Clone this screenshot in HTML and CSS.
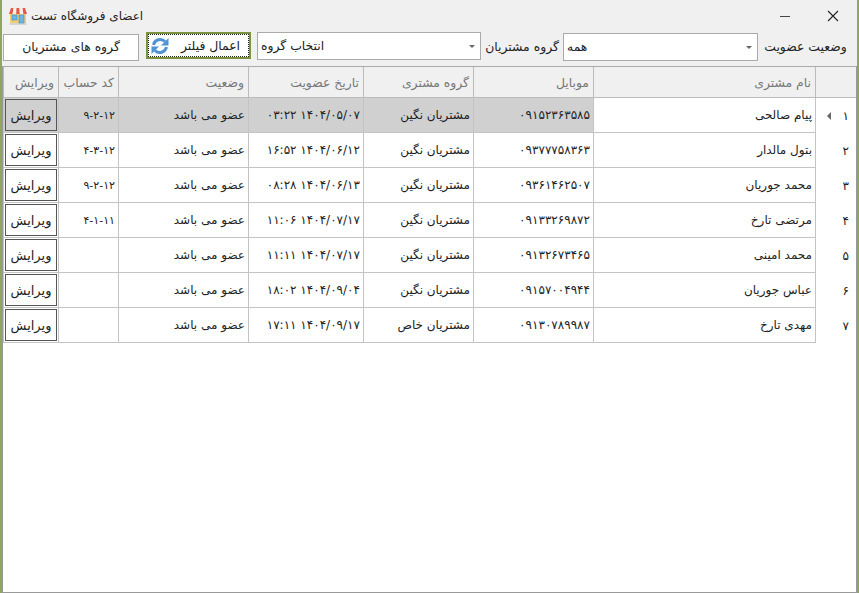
FILE: index.html
```html
<!DOCTYPE html>
<html>
<head>
  <title>اعضای فروشگاه تست</title>
  <link rel="stylesheet" href="styles.css">
</head>
<body>
  <div class="window">
    <div class="titlebar">
      <div class="title-left">
        <svg width="18" height="17" viewBox="0 0 18 17">
          <rect x="1" y="5" width="16" height="10" fill="#f2cf6b"/>
          <rect x="0.500" y="15" width="17" height="2" fill="#cfd4d6"/>
          <rect x="3" y="7" width="5" height="5" fill="#6db3e8" stroke="#3f8cc8" stroke-width="0.6"/>
          <rect x="10" y="7" width="5" height="8" fill="#6db3e8" stroke="#3f8cc8" stroke-width="0.6"/>
          <path d="M2 0 H4.500 L3.600 6 H0 Z" fill="#e4584a"/>
          <path d="M4.500 0 H7.500 L7.200 6 H3.600 Z" fill="#f8f2e6"/>
          <path d="M7.500 0 H10.500 L10.800 6 H7.200 Z" fill="#e4584a"/>
          <path d="M10.500 0 H13.500 L14.400 6 H10.800 Z" fill="#f8f2e6"/>
          <path d="M13.500 0 H16 L18 6 H14.400 Z" fill="#e4584a"/>
        </svg>
        <span class="title-text">اعضای فروشگاه تست</span>
      </div>
      <div class="title-btns">
        <span class="min-btn"></span>
        <svg width="12" height="12" viewBox="0 0 12 12"><path d="M1 1 L11 11 M11 1 L1 11" stroke="#222" stroke-width="1.1" fill="none"/></svg>
      </div>
    </div>

    <div class="toolbar">
      <div class="group-btn">گروه های مشتریان</div>
      <div class="apply-btn">
        <svg width="18" height="18" viewBox="0 0 18 18">
          <path d="M2.500 8 A6.800 6.800 0 0 1 14 4.500 M15.500 10 A6.800 6.800 0 0 1 4 13.500" stroke="#4f93d6" stroke-width="3" fill="none"/>
          <path d="M17.500 1 V8.500 H10 Z M0.500 17 V9.500 H8 Z" fill="#4f93d6"/>
        </svg>
        <span>اعمال فیلتر</span>
      </div>
      <div class="combo combo-group"><span>انتخاب گروه</span><i class="arrow"></i></div>
      <span class="label label-group">گروه مشتریان</span>
      <div class="combo combo-status"><span>همه</span><i class="arrow"></i></div>
      <span class="label label-status">وضعیت عضویت</span>
    </div>

    <div class="grid">
      <div class="row head">
        <div class="c c-edit">ویرایش</div>
        <div class="c c-code">کد حساب</div>
        <div class="c c-state">وضعیت</div>
        <div class="c c-date">تاریخ عضویت</div>
        <div class="c c-cgroup">گروه مشتری</div>
        <div class="c c-mobile">موبایل</div>
        <div class="c c-name">نام مشتری</div>
        <div class="c c-num"></div>
      </div>
      <div class="row selected">
        <div class="c c-edit"><span class="edit-btn">ویرایش</span></div>
        <div class="c c-code">۹-۲-۱۲</div>
        <div class="c c-state">عضو می باشد</div>
        <div class="c c-date" dir="ltr">۰۳:۲۲ ۱۴۰۴/۰۵/۰۷</div>
        <div class="c c-cgroup">مشتریان نگین</div>
        <div class="c c-mobile">۰۹۱۵۲۳۶۳۵۸۵</div>
        <div class="c c-name">پیام صالحی</div>
        <div class="c c-num"><span>۱</span><i class="pointer"></i></div>
      </div>
      <div class="row">
        <div class="c c-edit"><span class="edit-btn">ویرایش</span></div>
        <div class="c c-code">۴-۳-۱۲</div>
        <div class="c c-state">عضو می باشد</div>
        <div class="c c-date" dir="ltr">۱۶:۵۲ ۱۴۰۴/۰۶/۱۲</div>
        <div class="c c-cgroup">مشتریان نگین</div>
        <div class="c c-mobile">۰۹۳۷۷۷۵۸۳۶۳</div>
        <div class="c c-name">بتول مالدار</div>
        <div class="c c-num"><span>۲</span></div>
      </div>
      <div class="row">
        <div class="c c-edit"><span class="edit-btn">ویرایش</span></div>
        <div class="c c-code">۹-۲-۱۲</div>
        <div class="c c-state">عضو می باشد</div>
        <div class="c c-date" dir="ltr">۰۸:۲۸ ۱۴۰۴/۰۶/۱۳</div>
        <div class="c c-cgroup">مشتریان نگین</div>
        <div class="c c-mobile">۰۹۳۶۱۴۶۲۵۰۷</div>
        <div class="c c-name">محمد جوریان</div>
        <div class="c c-num"><span>۳</span></div>
      </div>
      <div class="row">
        <div class="c c-edit"><span class="edit-btn">ویرایش</span></div>
        <div class="c c-code">۴-۱-۱۱</div>
        <div class="c c-state">عضو می باشد</div>
        <div class="c c-date" dir="ltr">۱۱:۰۶ ۱۴۰۴/۰۷/۱۷</div>
        <div class="c c-cgroup">مشتریان نگین</div>
        <div class="c c-mobile">۰۹۱۳۳۲۶۹۸۷۲</div>
        <div class="c c-name">مرتضی تارخ</div>
        <div class="c c-num"><span>۴</span></div>
      </div>
      <div class="row">
        <div class="c c-edit"><span class="edit-btn">ویرایش</span></div>
        <div class="c c-code"></div>
        <div class="c c-state">عضو می باشد</div>
        <div class="c c-date" dir="ltr">۱۱:۱۱ ۱۴۰۴/۰۷/۱۷</div>
        <div class="c c-cgroup">مشتریان نگین</div>
        <div class="c c-mobile">۰۹۱۳۲۶۷۳۴۶۵</div>
        <div class="c c-name">محمد امینی</div>
        <div class="c c-num"><span>۵</span></div>
      </div>
      <div class="row">
        <div class="c c-edit"><span class="edit-btn">ویرایش</span></div>
        <div class="c c-code"></div>
        <div class="c c-state">عضو می باشد</div>
        <div class="c c-date" dir="ltr">۱۸:۰۲ ۱۴۰۴/۰۹/۰۴</div>
        <div class="c c-cgroup">مشتریان نگین</div>
        <div class="c c-mobile">۰۹۱۵۷۰۰۴۹۴۴</div>
        <div class="c c-name">عباس جوریان</div>
        <div class="c c-num"><span>۶</span></div>
      </div>
      <div class="row">
        <div class="c c-edit"><span class="edit-btn">ویرایش</span></div>
        <div class="c c-code"></div>
        <div class="c c-state">عضو می باشد</div>
        <div class="c c-date" dir="ltr">۱۷:۱۱ ۱۴۰۴/۰۹/۱۷</div>
        <div class="c c-cgroup">مشتریان خاص</div>
        <div class="c c-mobile">۰۹۱۳۰۷۸۹۹۸۷</div>
        <div class="c c-name">مهدی تارخ</div>
        <div class="c c-num"><span>۷</span></div>
      </div>
    </div>
  </div>
</body>
</html>
```

FILE: styles.css
```css
html, body {
  margin: 0;
  height: 100%;
}
body {
  font-family: "DejaVu Sans", sans-serif;
  font-size: 12px;
  color: #222;
  background: #f0f0f0;
  overflow: hidden;
}
.window {
  height: 593px;
  box-sizing: border-box;
  border-left: 2px solid #8fa65c;
  border-right: 2px solid #8fa65c;
  background: #f0f0f0;
  display: flex;
  flex-direction: column;
}

/* title bar */
.titlebar {
  height: 32px;
  flex: none;
  display: flex;
  justify-content: space-between;
  align-items: center;
  padding-left: 7px;
  padding-right: 18px;
}
.title-left {
  display: flex;
  align-items: center;
  gap: 4px;
}
.title-text {
  direction: rtl;
}
.title-btns {
  display: flex;
  align-items: center;
  gap: 37px;
}
.min-btn {
  width: 10px;
  height: 1px;
  background: #444;
}

/* filter row */
.toolbar {
  height: 34px;
  flex: none;
  display: flex;
  align-items: flex-start;
  font-size: 12.4px;
}
.group-btn {
  width: 136px;
  height: 27px;
  box-sizing: border-box;
  margin: 2px 0 0 1px;
  background: #fff;
  border: 1px solid #aaa;
  line-height: 23px;
  text-align: center;
  direction: rtl;
}
.apply-btn {
  width: 105px;
  height: 27px;
  box-sizing: border-box;
  margin-left: 7px;
  background: #fff;
  border: 2px solid #7c9440;
  outline: 1px dotted #222;
  outline-offset: -3px;
  display: flex;
  align-items: center;
  gap: 12px;
  padding-left: 3px;
}
.combo {
  height: 28px;
  box-sizing: border-box;
  background: #fff;
  border: 1px solid #aaa;
  display: flex;
  align-items: center;
  justify-content: space-between;
  padding: 0 5px 2px 3px;
}
.combo-group {
  width: 224px;
  margin-left: 6px;
}
.combo-status {
  width: 195px;
  margin-top: 1px;
}
.arrow {
  display: block;
  width: 0;
  height: 0;
  margin-top: 3px;
  border-left: 3px solid transparent;
  border-right: 3px solid transparent;
  border-top: 3px solid #666;
}
.label {
  direction: rtl;
  white-space: nowrap;
  line-height: 29px;
  text-align: center;
}
.label-group {
  width: 82px;
}
.label-status {
  width: 95px;
}

/* customers grid */
.grid {
  flex: 1;
  background: #fff;
  border: 1px solid #999;
  border-top-color: #aaa;
}
.row {
  display: flex;
  height: 35px;
}
.row.head {
  height: 31px;
  background: #f0f0f0;
  color: #777;
  font-size: 12.4px;
}
.c {
  box-sizing: border-box;
  flex: none;
  display: flex;
  align-items: center;
  border-left: 1px solid #c4c4c4;
  border-bottom: 1px solid #c4c4c4;
  padding-right: 3px;
  direction: rtl;
  white-space: nowrap;
}
.head .c {
  padding-right: 4px;
  border-color: #bbb;
}
.c[dir="ltr"] {
  direction: ltr;
  justify-content: flex-end;
}
.c-edit { width: 55px; padding: 0; justify-content: center; }
.head .c-edit { justify-content: flex-start; }
.c-code { width: 60px; font-size: 11px; letter-spacing: -0.8px; }
.head .c-code { font-size: 12.4px; letter-spacing: 0; }
.c-state { width: 130px; }
.c-date { width: 115px; letter-spacing: -0.1px; }
.c-cgroup { width: 110px; }
.c-mobile { width: 120px; }
.c-name { width: 223px; border-right: 1px solid #c4c4c4; }
.c.c-num {
  flex: 1;
  border-left: 0;
  border-bottom: 0;
  padding: 0 7px 0 0;
  gap: 12px;
}
.head .c.c-num {
  border-bottom: 1px solid #bbb;
}
.selected .c:not(.c-name):not(.c-num) {
  background: #d0d0d0;
}
.edit-btn {
  width: 52px;
  height: 32px;
  box-sizing: border-box;
  border: 1px solid #555;
  background: #fff;
  font-size: 13px;
  display: flex;
  align-items: center;
  justify-content: center;
}
.selected .edit-btn {
  background: #d0d0d0;
}
.pointer {
  display: block;
  width: 0;
  height: 0;
  border-top: 4px solid transparent;
  border-bottom: 4px solid transparent;
  border-right: 4px solid #666;
}
```
